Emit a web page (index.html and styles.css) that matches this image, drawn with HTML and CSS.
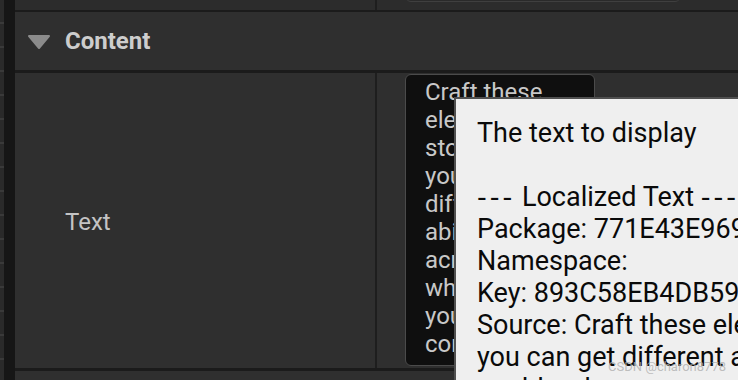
FILE: index.html
```html
<!DOCTYPE html>
<html>
<head>
<meta charset="utf-8">
<link rel="stylesheet" href="styles.css">
</head>
<body>
<div class="app">
  <div class="ruler"></div>
  <div class="gutter"></div>
  <div class="panel">
    <div class="row row-top">
      <div class="name-col"></div>
      <div class="divider"></div>
      <div class="value-col"><div class="prev-box"></div></div>
    </div>
    <div class="sep"></div>
    <div class="header">
      <svg class="caret" width="24" height="16" viewBox="0 0 24 16">
        <polygon points="2,2 22,2 12,14" fill="#8b8b8b" stroke="#8b8b8b" stroke-width="2" stroke-linejoin="round"/>
      </svg>
      <span class="header-title">Content</span>
    </div>
    <div class="sep sep-3"></div>
    <div class="row row-text">
      <div class="name-col label-cell"><span class="label">Text</span></div>
      <div class="divider"></div>
      <div class="value-col">
        <div class="text-box">Craft these
elements to
store so that
you can get
different
abilities
across
when
you
combine</div>
      </div>
    </div>
    <div class="sep sep-3"></div>
    <div class="row row-bottom"></div>
  </div>
</div>
<div class="tooltip">
  <div class="tip-line">The text to display</div>
  <div class="tip-line">&nbsp;</div>
  <div class="tip-line"><span class="dashes">---</span> Localized Text <span class="dashes">---</span></div>
  <div class="tip-line">Package: 771E43E9694F4B0A9D1E8D8C2A7B</div>
  <div class="tip-line">Namespace:</div>
  <div class="tip-line">Key: 893C58EB4DB5903A2E1F</div>
  <div class="tip-line">Source: Craft these elements to store so</div>
  <div class="tip-line">you can get different abilities across</div>
  <div class="tip-line">worlds when you combine</div>
  <span class="watermark">CSDN @charon8778</span>
</div>
</body>
</html>
```
FILE: styles.css
```css
html, body {
  margin: 0;
  padding: 0;
}
body {
  width: 738px;
  height: 380px;
  overflow: hidden;
  background: #151515;
  font-family: Roboto, "Noto Sans", "Liberation Sans", sans-serif;
  position: relative;
}
.app {
  display: flex;
  height: 380px;
}
.ruler {
  width: 4px;
  background: repeating-linear-gradient(to bottom, #2a2a2a 0px, #2a2a2a 22px, #3a3a3a 22px, #3a3a3a 24px);
}
.gutter {
  width: 11px;
  background: #161616;
}
.panel {
  flex: 1;
  display: flex;
  flex-direction: column;
  background: #2f2f2f;
}
.row {
  display: flex;
}
.name-col {
  width: 360px;
  flex: none;
}
.divider {
  width: 2px;
  background: #1e1e1e;
  flex: none;
}
.value-col {
  flex: 1;
  padding-left: 28px;
  overflow: hidden;
}
.row-top {
  height: 10px;
  background: #2c2c2c;
  overflow: hidden;
}
.prev-box {
  margin-top: -30px;
  margin-left: 0;
  width: 274px;
  height: 30px;
  border: 1px solid #3f3f3f;
  border-radius: 6px;
  background: #2a2a2a;
}
.sep {
  height: 2px;
  background: #1b1b1b;
}
.sep-3 {
  height: 3px;
}
.header {
  height: 58px;
  display: flex;
  align-items: center;
  padding-left: 12px;
  gap: 14px;
}
.caret {
  display: block;
  margin-top: 2px;
}
.header-title {
  font-weight: 700;
  font-size: 24px;
  color: #cdcdcd;
}
.row-text {
  height: 295px;
}
.label-cell {
  display: flex;
  align-items: center;
  padding-left: 50px;
  box-sizing: border-box;
}
.label {
  font-size: 24px;
  color: #c4c4c4;
  margin-top: 2px;
}
.row-text .value-col {
  padding-top: 1px;
}
.text-box {
  width: 169px;
  height: 282px;
  box-sizing: content-box;
  border: 1.5px solid #4b4b4b;
  border-radius: 6px;
  background: #0f0f0f;
  color: #c8c8c8;
  font-size: 24px;
  line-height: 28px;
  padding: 3px 0 5px 19px;
  overflow: hidden;
  white-space: pre;
}
.row-bottom {
  flex: 1;
}
.tooltip {
  position: absolute;
  left: 454px;
  top: 97px;
  width: 400px;
  height: 400px;
  background: #efefef;
  border-left: 2px solid #505050;
  border-top: 2px solid #505050;
  padding: 18px 0 0 21px;
  color: #0a0a0a;
  font-size: 27px;
  line-height: 32px;
  white-space: nowrap;
}
.dashes {
  font-family: "DejaVu Sans", sans-serif;
  letter-spacing: 3px;
}
.watermark {
  position: absolute;
  left: 152px;
  top: 260px;
  font-size: 13px;
  line-height: 16px;
  color: rgba(175, 175, 175, 0.8);
}
```
